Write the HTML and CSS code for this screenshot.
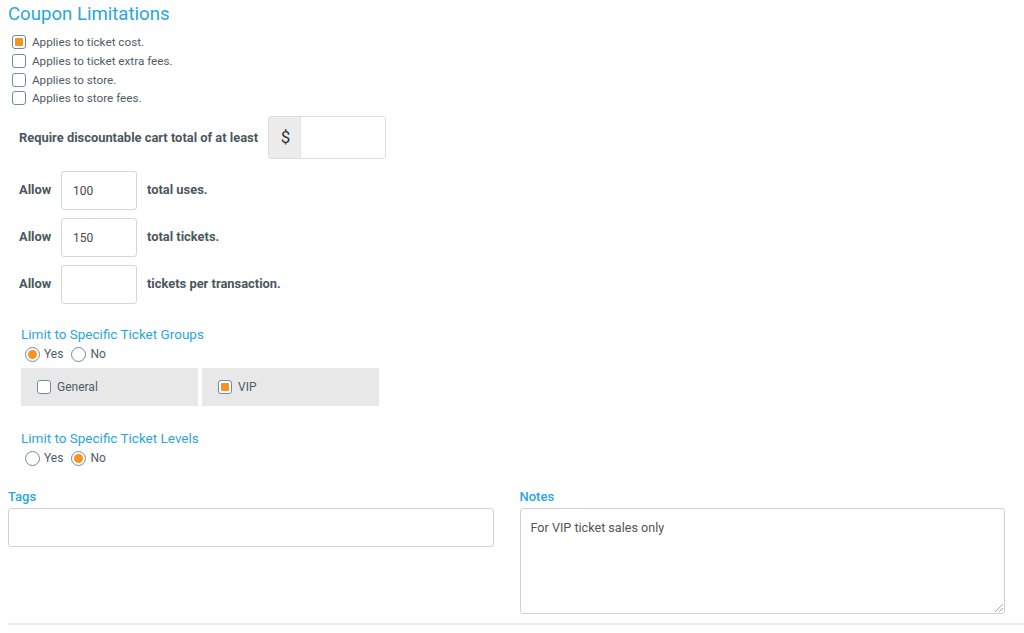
FILE: index.html
```html
<!DOCTYPE html>
<html>
<head>
<meta charset="utf-8">
<link rel="stylesheet" href="styles.css">
</head>
<body>
<div class="page">
  <h2 class="title">Coupon Limitations</h2>
  <div class="checks">
    <label class="chk"><span class="box on"></span>Applies to ticket cost.</label>
    <label class="chk"><span class="box"></span>Applies to ticket extra fees.</label>
    <label class="chk"><span class="box"></span>Applies to store.</label>
    <label class="chk"><span class="box"></span>Applies to store fees.</label>
  </div>

  <div class="row min-row">
    <span class="blabel">Require discountable cart total of at least</span>
    <div class="igroup"><span class="addon">$</span><span class="ifield"></span></div>
  </div>

  <div class="row allow-row">
    <span class="blabel allow">Allow</span>
    <div class="num">100</div>
    <span class="blabel">total uses.</span>
  </div>
  <div class="row allow-row">
    <span class="blabel allow">Allow</span>
    <div class="num">150</div>
    <span class="blabel">total tickets.</span>
  </div>
  <div class="row allow-row">
    <span class="blabel allow">Allow</span>
    <div class="num"></div>
    <span class="blabel">tickets per transaction.</span>
  </div>

  <div class="limit">
    <div class="sub">Limit to Specific Ticket Groups</div>
    <div class="radios">
      <label class="rad"><span class="circle on"></span>Yes</label>
      <label class="rad"><span class="circle"></span>No</label>
    </div>
    <div class="groups">
      <div class="grp"><span class="box"></span>General</div>
      <div class="grp"><span class="box on"></span>VIP</div>
    </div>
  </div>

  <div class="limit levels">
    <div class="sub">Limit to Specific Ticket Levels</div>
    <div class="radios">
      <label class="rad"><span class="circle"></span>Yes</label>
      <label class="rad"><span class="circle on"></span>No</label>
    </div>
  </div>

  <div class="bottom">
    <div class="col">
      <div class="flabel">Tags</div>
      <div class="tags"></div>
    </div>
    <div class="col">
      <div class="flabel">Notes</div>
      <div class="notes">For VIP ticket sales only<span class="grip"></span></div>
    </div>
  </div>
  <div class="rule"></div>
</div>
</body>
</html>
```

FILE: styles.css
```css
* { box-sizing: border-box; }
html, body { margin: 0; padding: 0; background: #fff; }
body { font-family: Roboto, "Noto Sans", sans-serif; color: #4a5760; }
.page { padding: 0 0 0 8px; }
.title {
  margin: 0; padding-top: 3px;
  font-size: 18.6px; font-weight: 400; color: #2aa6df; line-height: 22px;
}
.checks { margin-top: 8px; padding-left: 4px; }
.chk {
  display: flex; align-items: center; height: 18.7px;
  font-size: 11.7px; color: #4f5c65;
}
.box {
  width: 14px; height: 14px; border: 1.5px solid #6a8ea6; border-radius: 3px;
  background: #fff; margin-right: 6px; flex: none; position: relative;
}
.box.on::after {
  content: ""; position: absolute; left: 2px; top: 2px; right: 2px; bottom: 2px;
  background: #f7931e; border-radius: 1px;
}
.row { display: flex; align-items: center; padding-left: 11px; }
.blabel { font-size: 12.9px; font-weight: 700; color: #4a5760; }
.min-row { margin-top: 8px; height: 43px; }
.min-row .blabel { margin-right: 10px; margin-top: 1px; }
.igroup {
  display: flex; width: 118px; height: 43px; border: 1px solid #dcdcdc; border-radius: 3px; overflow: hidden;
}
.addon {
  width: 32px; background: #ececec; border-right: 1px solid #e3e3e3;
  display: flex; align-items: center; justify-content: center;
  font-size: 17px; color: #333; padding-left: 2px;
}
.ifield { flex: 1; background: #fff; }
.allow-row { height: 39px; margin-top: 8px; align-items: flex-start; }
.min-row + .allow-row { margin-top: 12px; }
.allow-row .blabel { line-height: 37px; }
.allow { width: 42px; }
.num {
  width: 76px; height: 39px; border: 1px solid #d6d6d6; border-radius: 3px;
  font-size: 12px; color: #4a4a4a; padding-left: 11px; line-height: 39px; margin-right: 10px;
}
.limit { padding-left: 13px; margin-top: 22px; }
.sub { font-size: 13.5px; color: #2aa6df; line-height: 16px; }
.radios { display: flex; margin-top: 4px; padding-left: 4px; height: 17px; align-items: center; }
.rad { display: flex; align-items: center; font-size: 12px; color: #4f5c65; margin-right: 8px; }
.circle {
  width: 15px; height: 15px; border-radius: 50%; border: 1.5px solid #6a8ea6;
  margin-right: 4px; position: relative; background: #fff;
}
.circle.on::after {
  content: ""; position: absolute; left: 2px; top: 2px; right: 2px; bottom: 2px;
  border-radius: 50%; background: #f7931e;
}
.groups { display: flex; gap: 4px; margin-top: 5px; }
.grp {
  width: 177px; height: 38px; background: #e8e8e8; display: flex; align-items: center;
  padding-left: 16px; font-size: 12px; color: #4f5c65;
}
.levels { margin-top: 24px; }
.bottom { display: flex; gap: 26px; margin-top: 23px; padding-right: 19px; }
.col { flex: 1; }
.flabel { font-size: 13px; color: #2aa6df; font-weight: 500; line-height: 14px; }
.tags { margin-top: 4px; height: 39px; border: 1px solid #d2d2d2; border-radius: 3px; }
.notes {
  margin-top: 4px; height: 106px; border: 1px solid #d2d2d2; border-radius: 3px;
  font-size: 12.6px; color: #555; padding: 11px 10px; position: relative;
}
.grip {
  position: absolute; right: 1px; bottom: 1px; width: 8px; height: 8px;
  background: linear-gradient(135deg, transparent 45%, #aaa 45%, #aaa 55%, transparent 55%, transparent 70%, #aaa 70%, #aaa 80%, transparent 80%);
}
.rule { height: 2px; background: #ececec; margin-top: 9px; }
```
